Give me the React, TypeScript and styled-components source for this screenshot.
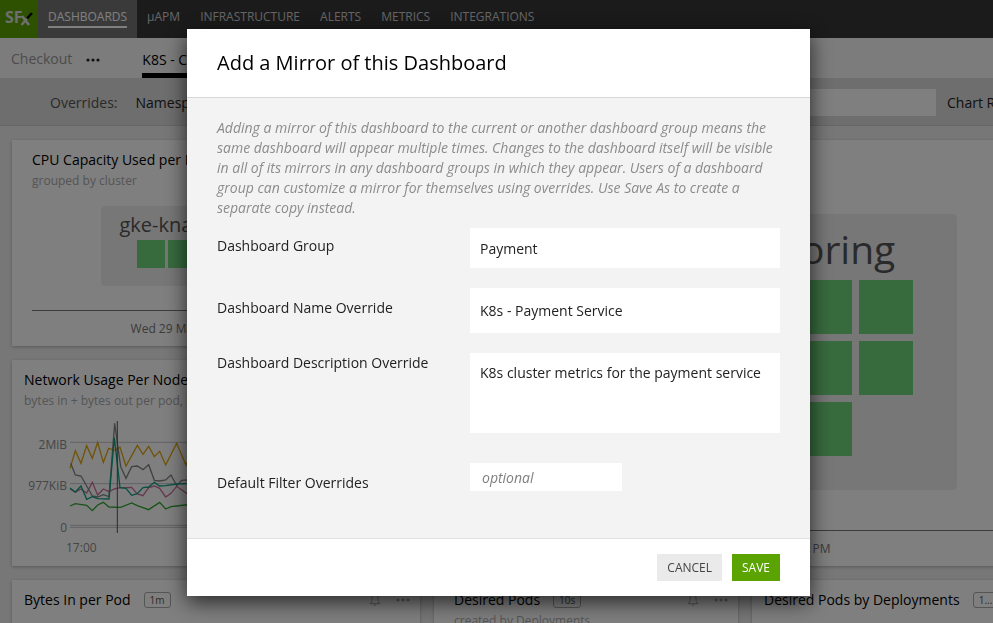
import React from "react";
import styled, { createGlobalStyle } from "styled-components";

const GlobalStyle = createGlobalStyle`
  *, *::before, *::after { box-sizing: border-box; }
  body {
    margin: 0;
    background: #eee;
    font-family: "Open Sans", "Noto Sans", sans-serif;
    font-size: 14px;
    line-height: 20px;
    color: #222;
  }
  button, input, textarea { font: inherit; color: inherit; }
`;

const Page = styled.div`
  height: 100vh;
  overflow: hidden;
`;

const NavBar = styled.nav`
  display: flex;
  height: 38px;
  background: #363636;
`;

const LogoLink = styled.a`
  display: block;
  width: 38px;
  height: 38px;
  background: #5aa300;
`;

const NavItem = styled.a<{ $active?: boolean }>`
  display: flex;
  align-items: flex-start;
  padding: 7px 10px 0;
  background: ${(p) => (p.$active ? "#757575" : "transparent")};
  color: ${(p) => (p.$active ? "#fff" : "#ccc")};
  font-size: 12px;
  text-decoration: none;
  white-space: nowrap;

  span {
    height: 21px;
    border-bottom: 2px solid ${(p) => (p.$active ? "#fff" : "transparent")};
  }
`;

const TabBar = styled.div`
  display: flex;
  align-items: stretch;
  height: 40px;
  padding-left: 11px;
  background: #f8f8f8;
`;

const Tab = styled.a<{ $active?: boolean }>`
  padding-top: ${(p) => (p.$active ? 12 : 11)}px;
  border-bottom: 5px solid ${(p) => (p.$active ? "#000" : "transparent")};
  color: ${(p) => (p.$active ? "#000" : "#999")};
  text-decoration: none;
  white-space: nowrap;
`;

const TabMenu = styled.button`
  display: flex;
  align-items: center;
  width: 70px;
  padding: 4px 0 0 14px;
  border: 0;
  background: none;
`;

const OverridesBar = styled.div`
  display: flex;
  align-items: center;
  height: 48px;
  padding: 2px 0 0 50px;
  border-bottom: 1px solid #ccc;
  background: #dcdcdc;
  white-space: nowrap;
`;

const OverridesTitle = styled.span`
  margin-right: 18px;
  color: #555;
`;

const OverrideField = styled.label`
  display: flex;
  flex: 1;
  align-items: center;
  gap: 12px;
  min-width: 0;
`;

const OverrideInput = styled.input`
  flex: 1;
  min-width: 0;
  height: 27px;
  padding: 0 10px;
  border: 0;
  background: #fff;
`;

const Resolution = styled.span`
  width: 46px;
  margin-left: 11px;
  overflow: hidden;
`;

const Board = styled.main`
  display: grid;
  grid-template-columns: minmax(408px, 4fr) minmax(304px, 3fr) minmax(304px, 3fr);
  grid-auto-rows: 206px;
  gap: 14px;
  padding: 14px 12px;
`;

type CardInset = "small" | "medium" | "large";

const cardPadding: Record<CardInset, string> = {
  small: "10px 10px 8px 12px",
  medium: "10px 10px 8px 20px",
  large: "10px 20px 8px",
};

const Card = styled.section<{ $tall?: boolean; $inset: CardInset }>`
  display: flex;
  flex-direction: column;
  grid-column: ${(p) => (p.$tall ? "2 / span 2" : "auto")};
  grid-row: ${(p) => (p.$tall ? "1 / span 2" : "auto")};
  min-width: 0;
  padding: ${(p) => cardPadding[p.$inset]};
  background: #fff;
  box-shadow: 0 1px 3px rgba(0, 0, 0, 0.25);
`;

const CardHead = styled.header`
  display: flex;
  align-items: center;
  white-space: nowrap;
`;

const CardTitle = styled.h2`
  margin: 0;
  color: #000;
  font-size: 14px;
  font-weight: 400;
`;

const Badge = styled.span`
  min-width: 26px;
  height: 16px;
  margin-left: 13px;
  padding: 0 5px;
  border: 1px solid #aaa;
  border-radius: 3px;
  color: #555;
  font-size: 10px;
  line-height: 14px;
  text-align: center;
`;

const CardTools = styled.div`
  display: flex;
  align-items: center;
  gap: 15px;
  margin-left: auto;
  color: #aaa;
`;

const ToolButton = styled.button`
  display: flex;
  padding: 0;
  border: 0;
  background: none;
`;

const CardNote = styled.p`
  margin: 1px 0 0;
  color: #aaa;
  font-size: 12px;
  white-space: nowrap;
`;

const HeatArea = styled.div<{ $end?: boolean }>`
  display: flex;
  flex: 1;
  align-items: flex-start;
  justify-content: ${(p) => (p.$end ? "flex-end" : "center")};
  padding: ${(p) => (p.$end ? "44px 79px 0 0" : "15px 0 0")};
  border-bottom: 1px solid #777;
`;

const HeatGroup = styled.div<{ $large?: boolean }>`
  display: flex;
  flex-direction: column;
  align-items: center;
  min-width: ${(p) => (p.$large ? 325 : 230)}px;
  min-height: ${(p) => (p.$large ? 276 : 80)}px;
  padding: ${(p) => (p.$large ? "5px 0 0" : "5px 6px 0 0")};
  border-radius: 4px;
  background: #eee;
  color: #555;
  font-size: ${(p) => (p.$large ? 39 : 20)}px;
  line-height: ${(p) => (p.$large ? 60 : 28)}px;
`;

const HeatGrid = styled.div<{ $size: number; $gap: number; $columns: number }>`
  display: grid;
  grid-template-columns: repeat(${(p) => p.$columns}, ${(p) => p.$size}px);
  grid-auto-rows: ${(p) => p.$size}px;
  gap: ${(p) => p.$gap}px;
  margin-top: 1px;
`;

const HeatCell = styled.div`
  background: #6fd67d;
`;

const TimeLabel = styled.div`
  height: 27px;
  padding-top: 8px;
  color: #777;
  font-size: 12px;
  text-align: center;
`;

const ChartFrame = styled.div`
  margin-top: 4px;
  line-height: 0;
`;

const Backdrop = styled.div`
  position: fixed;
  inset: 0;
  display: flex;
  align-items: flex-start;
  justify-content: center;
  padding: 29px 0 0 4px;
  background: rgba(0, 0, 0, 0.5);
`;

const Dialog = styled.form`
  width: 100%;
  max-width: 623px;
  background: #fff;
  box-shadow: 0 6px 20px rgba(0, 0, 0, 0.7);
`;

const DialogTitle = styled.h1`
  margin: 0;
  padding: 20px 30px;
  color: #000;
  font-size: 20px;
  font-weight: 400;
  line-height: 28px;
`;

const DialogBody = styled.div`
  padding: 20px 30px 45px;
  border-top: 1px solid #d8d8d8;
  border-bottom: 1px solid #e0e0e0;
  background: #f3f3f3;
`;

const Intro = styled.p`
  margin: 0 0 10px;
  color: #8c8c8c;
  font-style: italic;
`;

const Field = styled.div<{ $labelTop: number; $after: number }>`
  display: grid;
  grid-template-columns: 253px 1fr;
  align-items: start;
  margin-bottom: ${(p) => p.$after}px;

  label {
    padding-top: ${(p) => p.$labelTop}px;
  }
`;

const TextInput = styled.input<{ $height: number }>`
  width: 100%;
  height: ${(p) => p.$height}px;
  padding: 0 10px;
  border: 0;
  background: #fff;
`;

const FilterInput = styled(TextInput)`
  width: 152px;
  padding: 0 12px;

  &::placeholder {
    color: #808080;
    font-style: italic;
    opacity: 1;
  }
`;

const TextArea = styled.textarea`
  display: block;
  width: 100%;
  height: 80px;
  padding: 10px;
  border: 0;
  background: #fff;
  resize: none;
`;

const DialogFooter = styled.footer`
  display: flex;
  justify-content: flex-end;
  gap: 10px;
  padding: 15px 30px;
`;

const ActionButton = styled.button<{ $primary?: boolean }>`
  height: 27px;
  padding: 0 10px;
  border: 0;
  background: ${(p) => (p.$primary ? "#5aa300" : "#eaeaea")};
  color: ${(p) => (p.$primary ? "#fff" : "#444")};
  font-size: 12px;
`;

const Dots = () => (
  <svg width="14" height="4" viewBox="0 0 14 4" fill="currentColor" aria-hidden="true">
    <circle cx="2" cy="2" r="1.6" />
    <circle cx="7" cy="2" r="1.6" />
    <circle cx="12" cy="2" r="1.6" />
  </svg>
);

const Bell = () => (
  <svg width="12" height="14" viewBox="0 0 12 14" fill="none" stroke="currentColor" aria-hidden="true">
    <path d="M6 1.5C3.8 1.8 3 3.4 3 5.4C3 8.6 2.4 9.4 1 10.7H11C9.6 9.4 9 8.6 9 5.4C9 3.4 8.2 1.8 6 1.5Z" />
    <path d="M4.8 11.5Q6 13.6 7.2 11.5" />
  </svg>
);

const Logo = () => (
  <svg width="38" height="38" viewBox="0 0 38 38" role="img" aria-label="SFx">
    <text x="5" y="23" fill="#ddd" fontFamily="Open Sans" fontWeight="700" fontSize="16">SF</text>
    <path d="M22 16L29 25" stroke="#ddd" strokeWidth="2.6" />
    <path d="M21.5 25L27 18.5" stroke="#ddd" strokeWidth="2.4" />
    <path d="M27 18.5L32 13" stroke="#000" strokeWidth="2.4" />
  </svg>
);

const series = [
  { color: "#e0a810", points: "30,160 46,107 63,145 80,92 97,130 113,82 130,142 146,100 163,106 180,97 198,153 232,91 249,118 266,94 283,125 299,109 317,150 350,85 378,150 400,100" },
  { color: "#d0709c", points: "30,222 46,232 63,222 80,234 97,202 113,240 130,222 147,230 163,222 180,218 215,217 232,237 249,242 266,218 283,213 299,220 317,246 333,235 350,214 380,235 400,220" },
  { color: "#858585", points: "32,145 46,180 63,183 97,243 113,246 130,239 147,245 164,25 182,155 198,190 215,155 232,153 249,164 266,149 283,196 299,198 317,195 333,180 350,212 365,196 400,193" },
  { color: "#10a080", points: "30,219 46,231 63,213 80,253 97,245 113,251 147,252 163,68 180,218 198,220 215,241 232,236 249,218 266,216 283,202 299,213 317,212 350,207 400,205" },
  { color: "#30a830", points: "30,273 46,266 80,271 97,287 113,270 130,262 147,276 182,277 215,264 232,272 266,284 299,262 317,282 333,275 350,273 400,267" },
];

const NetworkChart = () => (
  <ChartFrame>
    <svg width="384" height="143" viewBox="0 0 384 143" role="img" aria-label="Network usage">
      <g transform="translate(36 0) scale(0.3333)" fill="none" strokeWidth="3">
        {[82, 206, 331, 337].map((y) => (
          <path key={y} d={`M30 ${y}H1040`} stroke="#c4c4cc" />
        ))}
        {series.map((s) => (
          <polyline key={s.color} points={s.points} stroke={s.color} strokeWidth="4" />
        ))}
        <path d="M172 18V354" stroke="#555" strokeWidth="3" />
      </g>
      <g fill="#8c8c8c" fontSize="12">
        <text x="43" y="34" textAnchor="end">2MiB</text>
        <text x="43" y="75" textAnchor="end">977KiB</text>
        <text x="43" y="117" textAnchor="end">0</text>
        <text x="42" y="137">17:00</text>
      </g>
    </svg>
  </ChartFrame>
);

const navLabels = ["µAPM", "INFRASTRUCTURE", "ALERTS", "METRICS", "INTEGRATIONS"];

const HeatCells = ({ count }: { count: number }) => (
  <>
    {Array.from({ length: count }, (_, i) => (
      <HeatCell key={i} />
    ))}
  </>
);

const Tools = () => (
  <CardTools>
    <ToolButton type="button" aria-label="Alerts"><Bell /></ToolButton>
    <ToolButton type="button" aria-label="Chart menu"><Dots /></ToolButton>
  </CardTools>
);

export default function App() {
  return (
    <>
      <GlobalStyle />
      <Page>
        <NavBar>
          <LogoLink href="#"><Logo /></LogoLink>
          <NavItem href="#" $active><span>DASHBOARDS</span></NavItem>
          {navLabels.map((label) => (
            <NavItem key={label} href="#"><span>{label}</span></NavItem>
          ))}
        </NavBar>
        <TabBar>
          <Tab href="#">Checkout</Tab>
          <TabMenu type="button" aria-label="Group menu"><Dots /></TabMenu>
          <Tab href="#" $active>K8S - Checkout</Tab>
        </TabBar>
        <OverridesBar>
          <OverridesTitle>Overrides:</OverridesTitle>
          <OverrideField>
            Namespace
            <OverrideInput type="text" />
          </OverrideField>
          <Resolution>Chart Resolution</Resolution>
        </OverridesBar>
        <Board>
          <Card $inset="large">
            <CardHead><CardTitle>CPU Capacity Used per Node</CardTitle></CardHead>
            <CardNote>grouped by cluster</CardNote>
            <HeatArea>
              <HeatGroup>
                gke-knative-cluster1
                <HeatGrid $size={28} $gap={3} $columns={5}><HeatCells count={5} /></HeatGrid>
              </HeatGroup>
            </HeatArea>
            <TimeLabel>Wed 29 May 2019 03:48:20 PM</TimeLabel>
          </Card>
          <Card $tall $inset="large">
            <CardHead><CardTitle>Pods</CardTitle></CardHead>
            <HeatArea $end>
              <HeatGroup $large>
                monitoring
                <HeatGrid $size={54} $gap={7} $columns={4}><HeatCells count={11} /></HeatGrid>
              </HeatGroup>
            </HeatArea>
            <TimeLabel>Wed 29 May 2019 03:48:20 PM</TimeLabel>
          </Card>
          <Card $inset="small">
            <CardHead><CardTitle>Network Usage Per Node</CardTitle></CardHead>
            <CardNote>bytes in + bytes out per pod, by node</CardNote>
            <NetworkChart />
          </Card>
          <Card $inset="small">
            <CardHead>
              <CardTitle>Bytes In per Pod</CardTitle>
              <Badge>1m</Badge>
              <Tools />
            </CardHead>
          </Card>
          <Card $inset="medium">
            <CardHead>
              <CardTitle>Desired Pods</CardTitle>
              <Badge>10s</Badge>
              <Tools />
            </CardHead>
            <CardNote>created by Deployments</CardNote>
          </Card>
          <Card $inset="small">
            <CardHead>
              <CardTitle>Desired Pods by Deployments</CardTitle>
              <Badge>1...</Badge>
            </CardHead>
          </Card>
        </Board>
      </Page>
      <Backdrop>
        <Dialog role="dialog" aria-labelledby="dialog-title" onSubmit={(e) => e.preventDefault()}>
          <DialogTitle id="dialog-title">Add a Mirror of this Dashboard</DialogTitle>
          <DialogBody>
            <Intro>
              Adding a mirror of this dashboard to the current or another dashboard group means the
              same dashboard will appear multiple times. Changes to the dashboard itself will be
              visible in all of its mirrors in any dashboard groups in which they appear. Users of a
              dashboard group can customize a mirror for themselves using overrides. Use Save As to
              create a separate copy instead.
            </Intro>
            <Field $labelTop={8} $after={20}>
              <label htmlFor="group">Dashboard Group</label>
              <TextInput id="group" type="text" $height={40} defaultValue="Payment" />
            </Field>
            <Field $labelTop={10} $after={20}>
              <label htmlFor="name">Dashboard Name Override</label>
              <TextInput id="name" type="text" $height={45} defaultValue="K8s - Payment Service" />
            </Field>
            <Field $labelTop={0} $after={30}>
              <label htmlFor="description">Dashboard Description Override</label>
              <TextArea id="description" defaultValue="K8s cluster metrics for the payment service" />
            </Field>
            <Field $labelTop={10} $after={0}>
              <label htmlFor="filters">Default Filter Overrides</label>
              <FilterInput id="filters" type="text" $height={28} placeholder="optional" />
            </Field>
          </DialogBody>
          <DialogFooter>
            <ActionButton type="button">CANCEL</ActionButton>
            <ActionButton type="submit" $primary>SAVE</ActionButton>
          </DialogFooter>
        </Dialog>
      </Backdrop>
    </>
  );
}
